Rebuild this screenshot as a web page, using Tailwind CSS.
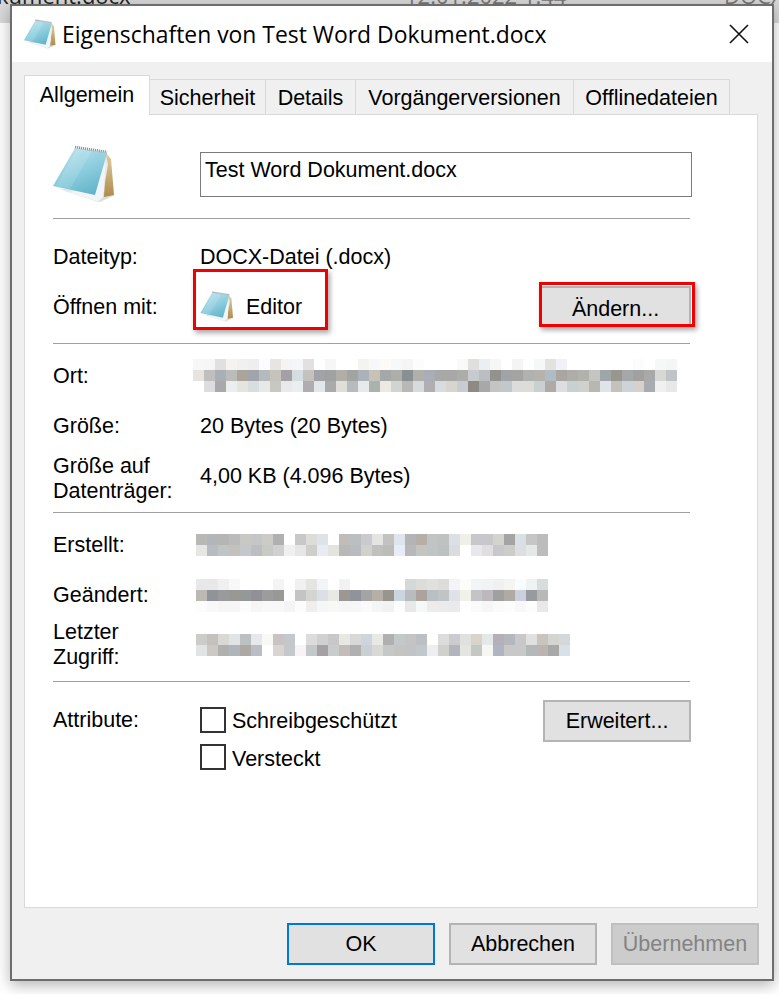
<!DOCTYPE html>
<html lang="de">
<head>
  <meta charset="UTF-8" />
  <title>Eigenschaften von Test Word Dokument.docx</title>
  <script src="https://cdn.jsdelivr.net/npm/@tailwindcss/browser@4"></script>
</head>
<body class="bg-white text-black font-['Liberation_Sans',sans-serif] text-[21.5px] leading-6 overflow-hidden">

  <!-- icon used three times -->
  <svg class="absolute w-0 h-0">
    <defs>
      <linearGradient id="cover" x1="0.2" y1="0" x2="0.7" y2="1">
        <stop offset="0" stop-color="#bce3ed" />
        <stop offset="0.55" stop-color="#8accdd" />
        <stop offset="1" stop-color="#62b3c9" />
      </linearGradient>
      <linearGradient id="back" x1="0" y1="0" x2="0" y2="1">
        <stop offset="0" stop-color="#e0cfa0" />
        <stop offset="1" stop-color="#b08a4c" />
      </linearGradient>
      <symbol id="notepad" viewBox="13 10 62 58">
        <path d="M20 54 L60 67 L75 60 L62 56 Z" fill="#9a9a9a" opacity=".35" />
        <path d="M66 18 L71 24 L74 60 L64 62 Z" fill="url(#back)" />
        <path d="M24 56 L66 20 L68 30 L62 64 L58 67 Z" fill="#e4eaee" />
        <path d="M60 40 L66 26 L63 62 L58 66 L30 58 Z" fill="#f2f5f7" />
        <path d="M35 13 L67 18 L55 60 L13 51 Z" fill="url(#cover)" />
        <path d="M37 14 L52 16 L30 54 L16 51 Z" fill="#fff" opacity=".12" />
        <path d="M35 12 L67 17" stroke="#8c9499" stroke-width="2.6" stroke-dasharray="1.2 .8" />
      </symbol>
    </defs>
  </svg>

  <div class="relative w-[779px] h-[994px] overflow-hidden">
    <!-- explorer list behind the dialog -->
    <div class="h-[23px] bg-[#d9d9d9] overflow-hidden relative font-['Open_Sans',sans-serif] text-[22px] text-[#222]">
      <span class="absolute left-[-3px] top-[-17px] whitespace-nowrap">kument.docx</span>
      <span class="absolute left-[405px] top-[-17px] whitespace-nowrap text-[#777]">12.01.2022 1:44</span>
      <span class="absolute left-[724px] top-[-17px] whitespace-nowrap text-[#777]">DOCX</span>
    </div>

    <!-- dialog -->
    <div class="absolute left-[10px] top-[4px] w-[764px] h-[977px] border-2 border-[#6d6d6d] bg-[#f0f0f0] shadow-[0_4px_14px_rgba(0,0,0,0.3)]">
      <div class="h-[56px] bg-white flex items-center pl-[12px] pr-[22px]">
        <svg class="w-[32px] h-[30px]"><use href="#notepad" /></svg>
        <span class="ml-[6px] pt-[2px] font-['Open_Sans',sans-serif] text-[22.9px]">Eigenschaften von Test Word Dokument.docx</span>
        <svg class="ml-auto w-[22px] h-[22px]" viewBox="0 0 22 22"><path d="M2 2 L20 20 M20 2 L2 20" stroke="#111" stroke-width="1.6" fill="none" /></svg>
      </div>

      <div class="flex items-end h-[39px] mt-[13px] ml-[12px]">
        <div class="relative z-10 w-[126px] h-[40px] -mb-px bg-white border border-b-0 border-[#d9d9d9] flex items-center justify-center pb-[1px]">Allgemein</div>
        <div class="w-[116px] h-[35px] pt-[2px] border-t border-r border-[#d9d9d9] flex items-center justify-center">Sicherheit</div>
        <div class="w-[90px] h-[35px] pt-[2px] border-t border-r border-[#d9d9d9] flex items-center justify-center">Details</div>
        <div class="w-[218px] h-[35px] pt-[2px] border-t border-r border-[#d9d9d9] flex items-center justify-center">Vorgängerversionen</div>
        <div class="w-[156px] h-[35px] pt-[2px] border-t border-r border-[#d9d9d9] flex items-center justify-center">Offlinedateien</div>
      </div>

      <div class="ml-[12px] w-[734px] h-[794px] bg-white border border-[#d9d9d9] pl-[28px] pt-[30px]">
        <div class="flex h-[57px]">
          <svg class="w-[62px] h-[58px]"><use href="#notepad" /></svg>
          <div class="ml-[85px] mt-[7px] w-[492px] h-[45px] border border-[#7a7a7a] pl-[4px] pt-[5px]">Test Word Dokument.docx</div>
        </div>
        <div class="mt-[16px] w-[637px] h-px bg-[#a0a0a0]"></div>

        <div class="flex items-center h-[24px] pt-[2px] mt-[25px]">
          <div class="w-[147px]">Dateityp:</div>
          <div>DOCX-Datei (.docx)</div>
        </div>
        <div class="flex items-center h-[40px] mt-[18px] relative">
          <div class="w-[147px] pt-[2px]">Öffnen mit:</div>
          <svg class="w-[34px] h-[31px]"><use href="#notepad" /></svg>
          <div class="ml-[12px] pt-[2px] w-[56px]">Editor</div>
          <div class="absolute left-[140px] top-[-17px] w-[135px] h-[61px] border-[3px] border-[#f00000] shadow-[2px_3px_5px_rgba(0,0,0,0.35)]"></div>
          <div class="relative ml-[238px] w-[151px] h-[40px] bg-[#e1e1e1] border-2 border-[#b4b4b4] flex items-center justify-center pt-[5px]">
            Ändern...
            <div class="absolute left-[-3px] top-[-6px] w-[156px] h-[45px] border-[3px] border-[#f00000] shadow-[2px_3px_5px_rgba(0,0,0,0.35)]"></div>
          </div>
        </div>
        <div class="mt-[17px] w-[637px] h-px bg-[#a0a0a0]"></div>

        <div class="flex items-center h-[24px] pt-[2px] mt-[19px]">
          <div class="w-[147px]">Ort:</div>
          <div id="m-ort" class="-ml-[7px] -mt-[2px]"></div>
        </div>
        <div class="flex items-center h-[24px] pt-[2px] mt-[26px]">
          <div class="w-[147px]">Größe:</div>
          <div>20 Bytes (20 Bytes)</div>
        </div>
        <div class="flex items-center h-[50px] pt-[2px] mt-[16px]">
          <div class="w-[147px] leading-[25px]">Größe auf<br />Datenträger:</div>
          <div class="mb-[7px]">4,00 KB (4.096 Bytes)</div>
        </div>
        <div class="mt-[9px] w-[637px] h-px bg-[#a0a0a0]"></div>

        <div class="flex items-center h-[24px] pt-[2px] mt-[19px]">
          <div class="w-[147px]">Erstellt:</div>
          <div id="m-erstellt" class="-ml-[4px]"></div>
        </div>
        <div class="flex items-center h-[24px] pt-[2px] mt-[26px]">
          <div class="w-[147px]">Geändert:</div>
          <div id="m-geaendert" class="-ml-[4px]"></div>
        </div>
        <div class="flex items-center h-[50px] pt-[2px] mt-[13px]">
          <div class="w-[147px] leading-[25px]">Letzter<br />Zugriff:</div>
          <div id="m-zugriff" class="-ml-[4px]"></div>
        </div>
        <div class="mt-[12px] w-[637px] h-px bg-[#a0a0a0]"></div>

        <div class="flex mt-[17px]">
          <div class="w-[147px] mt-[9px]">Attribute:</div>
          <div class="w-[343px]">
            <div class="flex items-center h-[26px] mt-[8px]">
              <div class="w-[26px] h-[26px] border-2 border-[#333]"></div>
              <span class="ml-[6px] pt-[2px]">Schreibgeschützt</span>
            </div>
            <div class="flex items-center h-[26px] mt-[11px]">
              <div class="w-[26px] h-[26px] border-2 border-[#333]"></div>
              <span class="ml-[6px] pt-[3px]">Versteckt</span>
            </div>
          </div>
          <div class="mt-[1px] w-[148px] h-[42px] bg-[#e1e1e1] border-2 border-[#b4b4b4] flex items-center justify-center">Erweitert...</div>
        </div>
      </div>

      <div class="flex justify-end gap-[14px] mt-[15px] pr-[13px]">
        <div class="w-[148px] h-[42px] bg-[#e1e1e1] border-2 border-[#0078d7] flex items-center justify-center">OK</div>
        <div class="w-[148px] h-[42px] bg-[#e1e1e1] border-2 border-[#b4b4b4] flex items-center justify-center">Abbrechen</div>
        <div class="w-[148px] h-[42px] bg-[#cccccc] border-2 border-[#bfbfbf] text-[#838383] flex items-center justify-center">Übernehmen</div>
      </div>
    </div>
  </div>

  <script>
    // the blurred-out values: rows of 11px squares, colours sampled from the picture
    const W = 'ffffff';
    const mosaics = {
      'm-ort': [
        ['f7f7f7','f6f6f4','dfe1e1','f4f3f1','f0f0f0','eeeeee','fbfcfd','e6e5e3','f5f4f5','f4f6f8','e2e0e1','fdfefe','f6f6f6',W,W,'f3f3f2','f6f8fa','fdfbf8','f6f8fa','f5f5f5','fcfcfc',W,W,W,'f8fafa','e0dfdd','eceff1','f6f6f6',W,'f4f4f4',W,'f6f8f8','e4e2e0','f0f2f5',W,W,W,W,W,W,'fcfcfc',W,'f6f8f8','f4f6f6'],
        ['e6e3e0','c0bfbd','a9b0b5','bbbbb9','aba49b','a0a5ab','b5babd','c5c3bc','a3a1a6','d6dde0','c4c1be','a1a3a7','a0a2a2','b0aea6','a2a4a2','adb1b8','c8c1b8','a6a8a8','adadaa','899094','b0afa8','a9adb8','a8a8a8','a8a8a6','acaca8','c8cbce','bcbdc0','94928e','a0a4a6','a4a5a2','b0b2b0','b5b3ae','b0bcc4','a9a5a3','aeadaa','b2b2ac','c4c4c0','9ea6aa','98968f','a4a8a8','a0a09e','a8aaaa','d6d8d5','c0c4c6'],
        [W,'dddcdf','a9a9a9','ebedef','e6e4de','d8dde0','e8e8e8','c8c8c2','e9e8ea','e9eef0','b0adb0','e4e7ea','aaaaaa','e0ded8','b8bbbe','e6eaec','abb2ae','eaeae3','d2d4d2','b8b8b6','d8dbdd','b0aeb0','d8dcde','d8d4ce','c8ccd0','8c8a82','a8a8a8','c4c4c4','c0c8cc','dcdcdc','dedcd8','c8d0d0','b0aaa6','dcdedf','c8d0d0','d0d0cc','b8b8b2','e0e4e8','c4c2bc','ccd4d8','d8d0cc','a8acb0','f0f0f0','e8e8e8']
      ],
      'm-erstellt': [
        ['b8b8b6','b4b5b8','b5b5b5','bbbbbb','c8c8c5','c4c6c8','cbcbc7','b0b0b2',W,'c8c8c8','dcdcd8','dde3e8',W,'c0bcb8','bcbfbf','c8cacd','e4e4e2','c4c2c0','e0e4ec','b4b4b6','b4afa8','c2c4c4','c0c2c2','dce0e4','f0f0ea','c8c8cc','c8c8cc','d4d4ce','a4a4a4','d8e0e4','c6c6c6','bcbcbc'],
        ['e6e6e2','b8bcc0','c0c4c2','c4c0bc','c4c8cc','bcbec2','c8c8c4','d0d0d0','f0f0f0','e6e6e6','cececc','e8ecf0','e4e4de','b8b8b8','b8bcc0','d0d0cc','c0c0be','bcbcb8','e8ecf4','b8b8ba','c4c4c0','c0c4c4','bcc0c0','dcdce0',W,'e8e8ec','e0dee0','c8c8cc','ccccc8','dcdee2','e6e8e8','bcbcbc']
      ],
      'm-geaendert': [
        ['e8e8e8','e8e8e8','f0f0f0','f8f8f8',W,W,W,'f4f4f4',W,'f0f0f0','e4e4e2','f2f4f8',W,'f2f2f2',W,W,W,W,W,'d4d8d8','dcdcd8','e0e0dc','dcdcd8','f4f4f8','fcfcf8','f2f4f8','f0f4f4','f0f0f2','f4f4f0','f8fcff','eef2f0','d8dcdc'],
        ['bcb8b4','909498','989a9c','989894','949898','909096','9c9c9e','989896','fcfcfc','c4c4c4','d4d4d0','dce0e4','e8e8e4','9c9694','90949a','a4a4a4','b4b0a8','98948e','ccd4e0','b8bcbe','aca49c','b8c0c4','c0c4c6','e0e2e8','f0f2ea','c4c4c8','bcb8bc','a0a0a0','b0aaa4','ccd0dc','989aa0','b8b8b8'],
        ['fcfcfc','f8f8f8','f6f6f6','f6f6f6','fafcfe','f6f6f6','f8f8f8','f8f8f8','f4f4f6','fcfcfc','f0eeec','f4f6f8','f8f8f4','f6f6f6','f4f6f8','fafafa','f4f6f6','f2f2f2','fcfefe','e8e8e8','f4f8f6','eeecea','ecebec','eaeaee',W,'fafafa','f6f6f6','fafafa','fcfcfc','f8f8fa','fcfcfc','e8e8e8']
      ],
      'm-zugriff': [
        ['ccccca','c4c0bc','d8d8d4','e0e4e4','bcc0c0','e6e8ec','f8f8f6','c8c4c4','c4c8ca',W,'dcdcdc','d0d0d2','c8c8c8','e8e8e2','d8d8d8','d0d4dc','e8e8e4','b0b0b0','c4c8c8','c4c4c4','bcc0c4','fefefc','dcdcdc','ccccd0','e0e0de','d8d4cc','e4e8e8','b4b0b8','b4b8bc','c8c8c8','e0e0e0','c8c4c0','d4d4d0','d4d8dc'],
        ['e0e4e4','ccc8c4','b0b0ae','b0b4bc','aca8a4','bcbcc4',W,'d8d4d0','c4c8cc','f8f4f6','c4c8c8','a4a0a4','c8cccc','c4bcb8','b0b0b0','c8d0d4','d8d8d4','c4c8c6','c4c4c2','c0c4c4','c0c8cc','eeeef2','d0d0cc','b4b4bc','e4e4e0','c4c8c4','f6f6f2','b0b4c0','c8c8c8','c8c8c8','b4b8b8','bcb4b0','a8a8a8','d8e0e8']
      ]
    };

    for (const id in mosaics) {
      const box = document.getElementById(id);
      for (const row of mosaics[id]) {
        const line = document.createElement('div');
        line.className = 'flex';
        for (const c of row) {
          const cell = document.createElement('div');
          cell.className = 'w-[11px] h-[11px]';
          cell.style.backgroundColor = '#' + c;
          line.appendChild(cell);
        }
        box.appendChild(line);
      }
    }
  </script>
</body>
</html>
